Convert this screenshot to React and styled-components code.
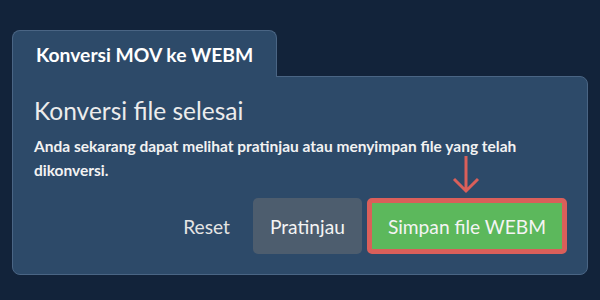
import React from "react";
import styled, { createGlobalStyle } from "styled-components";

const Global = createGlobalStyle`
  html, body { margin: 0; padding: 0; background: #12233a; }
  body { font-family: Lato, "Open Sans", sans-serif; width: 600px; height: 300px; overflow: hidden; }
`;

const Page = styled.div`
  padding: 30px 12px 0 12px;
`;

const Tab = styled.div`
  position: relative;
  z-index: 1;
  width: 265px;
  height: 47px;
  box-sizing: border-box;
  margin-bottom: -1px;
  background: #2d4a69;
  border: 1px solid #4a6584;
  border-bottom: none;
  border-radius: 8px 8px 0 0;
  display: flex;
  align-items: center;
  padding-left: 23px;
  color: #ffffff;
  font-weight: 700;
  font-size: 19.3px;
`;

const Panel = styled.div`
  box-sizing: border-box;
  width: 576px;
  height: 199px;
  background: #2d4a69;
  border: 1px solid #4a6584;
  border-radius: 0 8px 8px 8px;
  padding: 18px 20px 20px 21px;
  display: flex;
  flex-direction: column;
`;

const Heading = styled.h2`
  margin: 0;
  font-weight: 400;
  font-size: 24.5px;
  line-height: 32px;
  color: #ececec;
`;

const Text = styled.p`
  margin: 7px 0 0 0;
  font-size: 15.5px;
  font-weight: 700;
  line-height: 24px;
  color: #f2f2f2;
  max-width: 520px;
`;

const Actions = styled.div`
  margin-top: auto;
  display: flex;
  justify-content: flex-end;
  align-items: center;
`;

const LinkButton = styled.button`
  background: none;
  border: none;
  font-family: inherit;
  font-size: 19.2px;
  color: #e4e4e4;
  padding: 0 12px;
  margin-right: 11px;
`;

const Button = styled.button`
  box-sizing: border-box;
  height: 56px;
  border-radius: 5px;
  font-family: inherit;
  font-size: 19.2px;
  color: #f4f4f4;
  background: ${(p) => (p.$primary ? "#5cb85c" : "#4d5d6e")};
  border: ${(p) => (p.$primary ? "5px solid #da5f5a" : "none")};
  padding: ${(p) => (p.$primary ? "0 16px" : "0 17px")};
`;

const Highlight = styled.div`
  position: relative;
  margin-left: 5px;
  display: flex;
`;

const Arrow = styled.svg`
  position: absolute;
  left: 50%;
  bottom: 100%;
  margin-left: -16px;
  margin-bottom: 4px;
`;

export default function App() {
  return (
    <>
      <Global />
      <Page>
        <Tab>Konversi MOV ke WEBM</Tab>
        <Panel>
          <Heading>Konversi file selesai</Heading>
          <Text>
            Anda sekarang dapat melihat pratinjau atau menyimpan file yang telah dikonversi.
          </Text>
          <Actions>
            <LinkButton>Reset</LinkButton>
            <Button>Pratinjau</Button>
            <Highlight>
              <Arrow width="30" height="38" viewBox="0 0 30 38">
                <path d="M15 0 V35 M3 23 L15 35 L27 23" fill="none" stroke="#da5f5a" strokeWidth="3" />
              </Arrow>
              <Button $primary>Simpan file WEBM</Button>
            </Highlight>
          </Actions>
        </Panel>
      </Page>
    </>
  );
}
